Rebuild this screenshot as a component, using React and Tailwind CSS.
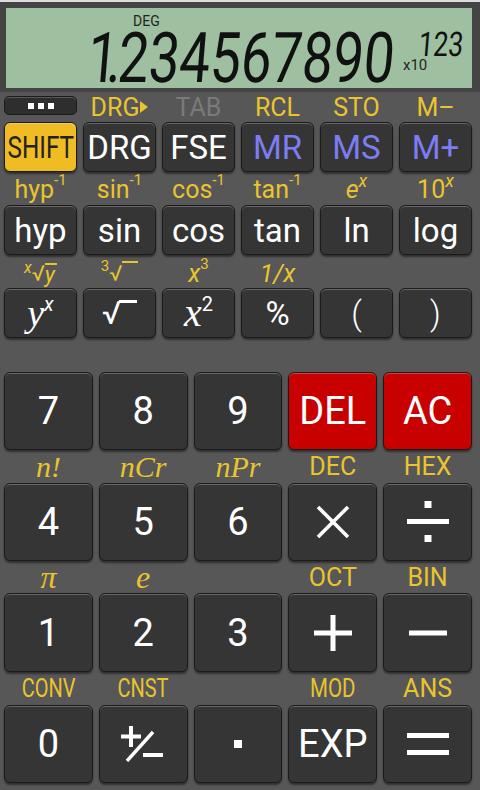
import React from "react";

const KEY =
  "flex items-center justify-center rounded-[6px] border border-[#1b1b1b] shadow-[inset_0_1px_0_rgba(255,255,255,0.25),0_2px_2px_rgba(0,0,0,0.45)]";

function Key({ children, bg = "bg-[#353535]", text = "text-white" }) {
  return <div className={`${KEY} ${bg} ${text}`}>{children}</div>;
}

function L({ children, c = "text-[#eac42e]" }) {
  return (
    <div className={`flex items-center justify-center text-[25px] leading-none ${c}`}>
      {children}
    </div>
  );
}

function Sup({ children, cls = "" }) {
  return <span className={`relative -top-[9px] text-[15px] leading-none ${cls}`}>{children}</span>;
}

const SERIF = "font-['Liberation_Serif',serif] italic";

function Plus() {
  return (
    <svg width="40" height="36" viewBox="0 0 40 36">
      <rect x="1" y="15.5" width="38" height="5" fill="white" />
      <rect x="17.5" y="0" width="5" height="36" fill="white" />
    </svg>
  );
}
function Minus() {
  return (
    <svg width="40" height="6" viewBox="0 0 40 6">
      <rect x="1" y="0.5" width="38" height="5" fill="white" />
    </svg>
  );
}
function Times() {
  return (
    <svg width="36" height="36" viewBox="0 0 36 36">
      <path d="M3 3 L33 33 M33 3 L3 33" stroke="white" strokeWidth="3.6" />
    </svg>
  );
}
function Divide() {
  return (
    <svg width="44" height="42" viewBox="0 0 44 42">
      <rect x="18.5" y="0" width="7" height="7" fill="white" />
      <rect x="1" y="18" width="42" height="5" fill="white" />
      <rect x="18.5" y="34" width="7" height="7" fill="white" />
    </svg>
  );
}
function Equals() {
  return (
    <svg width="44" height="24" viewBox="0 0 44 24">
      <rect x="1" y="1" width="42" height="5" fill="white" />
      <rect x="1" y="18" width="42" height="5" fill="white" />
    </svg>
  );
}
function PlusMinus() {
  return (
    <svg width="44" height="36" viewBox="0 0 44 36">
      <rect x="0" y="8.5" width="20" height="4" fill="white" />
      <rect x="8" y="0" width="4" height="21" fill="white" />
      <path d="M6 35 L32 6" stroke="white" strokeWidth="3.4" />
      <rect x="22" y="27" width="20" height="4" fill="white" />
    </svg>
  );
}

export default function App() {
  return (
    <div className="w-[480px] h-[790px] overflow-hidden bg-[#575757] flex flex-col font-['Roboto',sans-serif]">
      <div className="h-[2px] bg-[#dcdcdc]" />
      {/* Display */}
      <div className="bg-[#444444] pl-[6px] pr-[8px] pt-[6px] pb-[4px]">
        <div className="h-[80px] bg-[#9fc0a0] flex justify-end items-start pr-[6px] text-[#111]">
          <div className="w-[310px] shrink-0 flex flex-col">
            <div className="h-[13px] mt-[6px] ml-[45px] text-[14px] leading-none text-[#1d261d]">DEG</div>
            <div className="mt-[-4px] h-[62px] whitespace-nowrap text-[70px] leading-none origin-left scale-x-[0.78] -skew-x-6">
              1<span className="ml-[-0.2em] mr-[-0.063em]">.</span>234567890
            </div>
          </div>
          <div className="w-[68px] shrink-0 flex flex-col">
            <div className="self-end mr-[3px] mt-[19px] h-[34px] text-[34px] leading-none whitespace-nowrap origin-right scale-x-[0.78] -skew-x-6">
              123
            </div>
            <div className="ml-[5px] mt-[-3px] text-[15px] leading-none text-[#1d261d]">x10</div>
          </div>
        </div>
      </div>

      {/* Keypad */}
      <div className="pl-[4px] pr-[8px] flex flex-col">
        {/* row 0 */}
        <div className="h-[30px] grid grid-cols-6 gap-x-[6px] items-center">
          <div className="h-[19px] -mt-[3px] rounded-[5px] bg-[#2e2e2e] border border-[#1b1b1b] shadow-[inset_0_1px_0_rgba(255,255,255,0.2)] flex items-center justify-center gap-[4px]">
            <span className="w-[6px] h-[6px] bg-white" />
            <span className="w-[6px] h-[6px] bg-white" />
            <span className="w-[6px] h-[6px] bg-white" />
          </div>
          <L>
            DRG
            <svg width="8" height="12" viewBox="0 0 8 12" className="ml-[1px]">
              <path d="M0 0 L8 6 L0 12 Z" fill="#eac42e" />
            </svg>
          </L>
          <L c="text-[#7a7a7a]">TAB</L>
          <L>RCL</L>
          <L>STO</L>
          <L>M–</L>
        </div>
        {/* row 1 */}
        <div className="h-[50px] grid grid-cols-6 gap-x-[6px] text-[33px] leading-none">
          <Key bg="bg-[#efbd23]" text="text-[#222]">
            <span className="text-[32px] scale-x-[0.76]">SHIFT</span>
          </Key>
          <Key>DRG</Key>
          <Key>FSE</Key>
          <Key text="text-[#7d7df2]">MR</Key>
          <Key text="text-[#7d7df2]">MS</Key>
          <Key text="text-[#7d7df2]">M+</Key>
        </div>
        {/* labels */}
        <div className="h-[33px] grid grid-cols-6 gap-x-[6px] pt-[2px]">
          <L>hyp<Sup>-1</Sup></L>
          <L>sin<Sup>-1</Sup></L>
          <L>cos<Sup>-1</Sup></L>
          <L>tan<Sup>-1</Sup></L>
          <L><span className="italic">e</span><Sup cls="italic text-[18px]">x</Sup></L>
          <L>10<Sup cls="italic text-[18px]">x</Sup></L>
        </div>
        {/* row 2 */}
        <div className="h-[50px] grid grid-cols-6 gap-x-[6px] text-[33px] leading-none">
          <Key>hyp</Key>
          <Key>sin</Key>
          <Key>cos</Key>
          <Key>tan</Key>
          <Key>ln</Key>
          <Key>log</Key>
        </div>
        {/* labels */}
        <div className="h-[33px] grid grid-cols-6 gap-x-[6px] pt-[4px]">
          <L>
            <span className="text-[16px] italic relative -top-[6px]">x</span>
            <span className="text-[22px]">√</span>
            <span className="italic text-[22px] border-t-[2px] border-[#eac42e] leading-[20px] pr-[2px]">y</span>
          </L>
          <L>
            <span className="text-[15px] relative -top-[7px]">3</span>
            <span className="text-[22px]">√</span>
            <span className="w-[16px] h-[20px] border-t-[2px] border-[#eac42e] self-start mt-[2px]" />
          </L>
          <L><span className="italic">x</span><Sup>3</Sup></L>
          <L><span className="italic">1/x</span></L>
          <L></L>
          <L></L>
        </div>
        {/* row 3 */}
        <div className="h-[50px] grid grid-cols-6 gap-x-[6px] text-[33px] leading-none">
          <Key>
            <span className={`${SERIF} text-[38px]`}>y</span>
            <span className="italic text-[20px] relative -top-[9px]">x</span>
          </Key>
          <Key>
            <span className="flex items-start">
              <span className="text-[32px] leading-none">√</span>
              <span className="w-[18px] h-[3px] bg-white mt-[3px] -ml-[2px]" />
            </span>
          </Key>
          <Key>
            <span className={`${SERIF} text-[40px]`}>x</span>
            <span className="text-[20px] relative -top-[9px]">2</span>
          </Key>
          <Key>%</Key>
          <Key><span className="font-light">(</span></Key>
          <Key><span className="font-light">)</span></Key>
        </div>
        <div className="h-[34px]" />
        {/* row 4 */}
        <div className="h-[78px] grid grid-cols-5 gap-x-[6px] text-[38px] leading-none">
          <Key>7</Key>
          <Key>8</Key>
          <Key>9</Key>
          <Key bg="bg-[#c90000]">DEL</Key>
          <Key bg="bg-[#c90000]">AC</Key>
        </div>
        <div className="h-[33px] grid grid-cols-5 gap-x-[6px]">
          <L><span className={`${SERIF} text-[30px]`}>n!</span></L>
          <L><span className={`${SERIF} text-[30px]`}>nCr</span></L>
          <L><span className={`${SERIF} text-[30px]`}>nPr</span></L>
          <L>DEC</L>
          <L>HEX</L>
        </div>
        {/* row 5 */}
        <div className="h-[78px] grid grid-cols-5 gap-x-[6px] text-[38px] leading-none">
          <Key>4</Key>
          <Key>5</Key>
          <Key>6</Key>
          <Key><Times /></Key>
          <Key><Divide /></Key>
        </div>
        <div className="h-[32px] grid grid-cols-5 gap-x-[6px]">
          <L><span className={`${SERIF} text-[32px]`}>π</span></L>
          <L><span className={`${SERIF} text-[32px]`}>e</span></L>
          <L></L>
          <L>OCT</L>
          <L>BIN</L>
        </div>
        {/* row 6 */}
        <div className="h-[79px] grid grid-cols-5 gap-x-[6px] text-[38px] leading-none">
          <Key>1</Key>
          <Key>2</Key>
          <Key>3</Key>
          <Key><Plus /></Key>
          <Key><Minus /></Key>
        </div>
        <div className="h-[33px] grid grid-cols-5 gap-x-[6px]">
          <L><span className="scale-x-[0.8]">CONV</span></L>
          <L><span className="scale-x-[0.8]">CNST</span></L>
          <L></L>
          <L><span className="scale-x-[0.82]">MOD</span></L>
          <L>ANS</L>
        </div>
        {/* row 7 */}
        <div className="h-[78px] grid grid-cols-5 gap-x-[6px] text-[38px] leading-none">
          <Key>0</Key>
          <Key><PlusMinus /></Key>
          <Key><span className="w-[8px] h-[8px] bg-white" /></Key>
          <Key>EXP</Key>
          <Key><Equals /></Key>
        </div>
      </div>
    </div>
  );
}
